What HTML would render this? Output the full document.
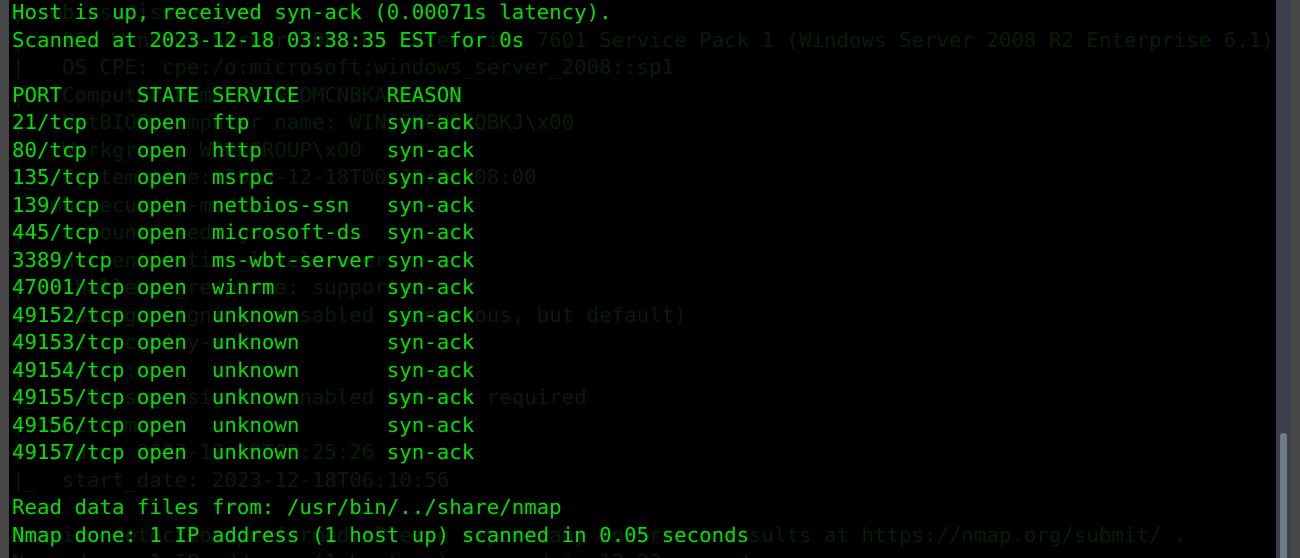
<!DOCTYPE html>
<html><head><meta charset="utf-8"><style>
html,body{margin:0;padding:0;width:1300px;height:558px;overflow:hidden;background:#000;}
.wrap{position:relative;width:1300px;height:558px;overflow:hidden;}
.l{position:absolute;left:0;top:0;width:9px;height:558px;background:#474747;}
.sb{position:absolute;left:1276px;top:0;width:15px;height:558px;background:#3a414b;}
.sb2{position:absolute;left:1291px;top:0;width:9px;height:558px;background:#474747;}
.th{position:absolute;left:1280px;top:433px;width:7px;height:130px;background:#717989;border-radius:3px;}
pre{position:absolute;left:12px;top:-1px;margin:0;font-family:"DejaVu Sans Mono","Liberation Mono",monospace;font-size:20.76px;line-height:27.5px;white-space:pre;}
.g{color:#071d07;}
.m{color:#00e000;}
</style></head><body><div class="wrap">
<div class="l"></div>
<pre class="g">| smb-os-discovery:
|   OS: Windows Server 2008 R2 Enterprise 7601 Service Pack 1 (Windows Server 2008 R2 Enterprise 6.1)
|   OS CPE: cpe:/o:microsoft:windows_server_2008::sp1
|   Computer name: WIN-OMCNBKAG46I02
|   NetBIOS computer name: WIN-OMCN02QBKJ\x00
|   Workgroup: WORKGROUP\x00
|_  System time: 2023-12-18T00:25:26-08:00
| smb-security-mode:
|   account_used: guest
|   authentication_level: user
|   challenge_response: supported
|_  message_signing: disabled (dangerous, but default)
| smb2-security-mode:
|   2:1:0:
|_    Message signing enabled but not required
| smb2-time:
|   date: 2023-12-18T08:25:26
|_  start_date: 2023-12-18T06:10:56

Service detection performed. Please report any incorrect results at https://nmap.org/submit/ .
Nmap done: 1 IP address (1 host up) scanned in 13.23 seconds</pre>
<pre class="m">Host is up, received syn-ack (0.00071s latency).
Scanned at 2023-12-18 03:38:35 EST for 0s

PORT      STATE SERVICE       REASON
21/tcp    open  ftp           syn-ack
80/tcp    open  http          syn-ack
135/tcp   open  msrpc         syn-ack
139/tcp   open  netbios-ssn   syn-ack
445/tcp   open  microsoft-ds  syn-ack
3389/tcp  open  ms-wbt-server syn-ack
47001/tcp open  winrm         syn-ack
49152/tcp open  unknown       syn-ack
49153/tcp open  unknown       syn-ack
49154/tcp open  unknown       syn-ack
49155/tcp open  unknown       syn-ack
49156/tcp open  unknown       syn-ack
49157/tcp open  unknown       syn-ack

Read data files from: /usr/bin/../share/nmap
Nmap done: 1 IP address (1 host up) scanned in 0.05 seconds</pre>
<div class="sb"></div><div class="sb2"></div><div class="th"></div>
</div></body></html>
